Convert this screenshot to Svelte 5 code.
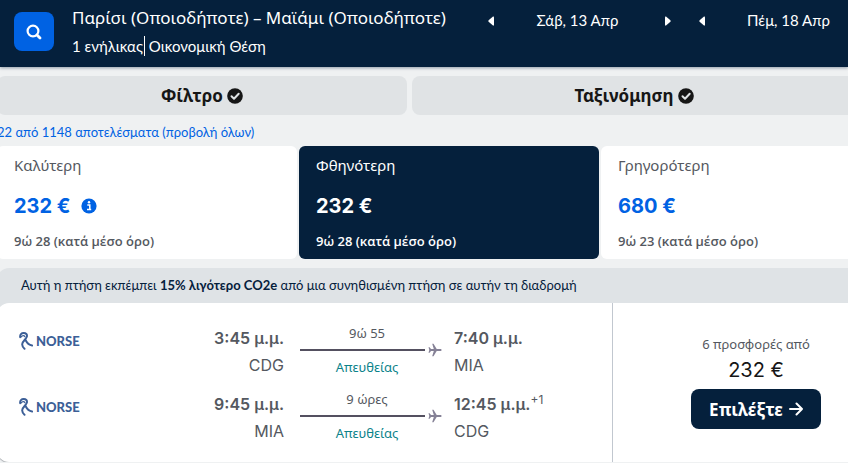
<script lang="ts">
  const dates = ['Σάβ, 13 Απρ', 'Πέμ, 18 Απρ'];

  const controls = ['Φίλτρο', 'Ταξινόμηση'];

  const tabs = [
    { id: 'best', name: 'Καλύτερη', price: '232 €', hours: '9ώ 28', info: true },
    { id: 'cheapest', name: 'Φθηνότερη', price: '232 €', hours: '9ώ 28', info: false },
    { id: 'fastest', name: 'Γρηγορότερη', price: '680 €', hours: '9ώ 23', info: false },
  ];

  const legs = [
    { depart: '3:45', from: 'CDG', duration: '9ώ 55', arrive: '7:40', to: 'MIA', days: '' },
    { depart: '9:45', from: 'MIA', duration: '9 ώρες', arrive: '12:45', to: 'CDG', days: '+1' },
  ];

  let selected = $state('cheapest');
</script>

<header class="header">
  <button class="search" aria-label="Αναζήτηση">
    <svg width="18" height="18" viewBox="0 0 18 18" fill="none" stroke="#fff" stroke-width="2.2">
      <circle cx="8" cy="8" r="5.4" />
      <path d="M12 12l3 3" stroke-width="2.8" stroke-linecap="round" />
    </svg>
  </button>
  <div class="summary">
    <h1>Παρίσι (Οποιοδήποτε) – Μαϊάμι (Οποιοδήποτε)</h1>
    <p><span>1 ενήλικας</span><span class="cabin">Οικονομική Θέση</span></p>
  </div>
  <div class="dates">
    {#each dates as date}
      <div class="stepper">
        <button aria-label="Προηγούμενη ημέρα">
          <svg width="6" height="10" viewBox="0 0 6 10"><path d="M5 .5Q6 0 6 1.5v7Q6 10 5 9.500L.6 5.800Q0 5 .6 4.200z" fill="#fff" /></svg>
        </button>
        <span class="date">{date}</span>
        <button aria-label="Επόμενη ημέρα">
          <svg width="6" height="10" viewBox="0 0 6 10"><path d="M1 .5Q0 0 0 1.500v7Q0 10 1 9.500L5.400 5.800Q6 5 5.400 4.200z" fill="#fff" /></svg>
        </button>
      </div>
    {/each}
  </div>
</header>

<main class="results">
  <div class="controls">
    {#each controls as control}
      <button>
        {control}
        <svg width="16" height="16" viewBox="0 0 16 16">
          <circle cx="8" cy="8" r="7.800" fill="#161616" />
          <path d="M4.500 8.200l2.500 2.500 4.700-5" fill="none" stroke="#e0e3e5" stroke-width="2" stroke-linecap="round" stroke-linejoin="round" />
        </svg>
      </button>
    {/each}
  </div>

  <a class="count" href="#all">22 από 1148 αποτελέσματα (προβολή όλων)</a>

  <div class="tabs">
    {#each tabs as tab}
      <button class="tab" class:selected={selected === tab.id} onclick={() => (selected = tab.id)}>
        <span class="name">{tab.name}</span>
        <span class="price">
          {tab.price}
          {#if tab.info}
            <svg width="16" height="16" viewBox="0 0 16 16">
              <circle cx="8" cy="8" r="7.600" fill="#0062e3" />
              <path d="M6.300 7h2.500v4.200M6 11.500h4.200" fill="none" stroke="#fff" stroke-width="1.500" />
              <circle cx="8" cy="4.300" r="1.200" fill="#fff" />
            </svg>
          {/if}
        </span>
        <span class="average">{tab.hours} (κατά μέσο όρο)</span>
      </button>
    {/each}
  </div>

  <article class="ticket">
    <p class="eco">Αυτή η πτήση εκπέμπει <strong>15% λιγότερο CO2e</strong> από μια συνηθισμένη πτήση σε αυτήν τη διαδρομή</p>
    <div class="card">
      <div class="legs">
        {#each legs as leg}
          <div class="leg">
            <div class="airline">
              <svg width="14" height="18" viewBox="0 0 14 18" fill="none" stroke="#3c5f97" stroke-width="2" stroke-linecap="round" stroke-linejoin="round">
                <path d="M1.200 5.200C.8 2.500 2.500 1 4.700 1s3.800 1.500 3.100 3.800C7 7.500 3 9.500 3.200 12.500c.1 2 1 3.300 2.300 4.300" />
                <path d="M2.200 4.900c1-1.500 3-1.700 3.700-.2" stroke-width="1.200" />
                <path d="M6.500 8c1.500 3 3.500 5 6.600 5.400" />
              </svg>
              <span>NORSE</span>
            </div>
            <div class="stop depart">
              <span class="time">{leg.depart} μ.μ.</span>
              <span class="code">{leg.from}</span>
            </div>
            <div class="route">
              <span class="duration">{leg.duration}</span>
              <div class="track">
                <span class="line"></span>
                <svg width="14" height="14" viewBox="0 0 14 14">
                  <path d="M13.600 7c0-.7-.6-1-1.400-1H8.700L5.500.7H4.200L5.800 6H3L1.600 4.300H.5L1.300 7l-.8 2.700h1.100L3 8h2.800l-1.600 5.300h1.300L8.700 8h3.500c.8 0 1.400-.3 1.400-1z" fill="#858196" />
                </svg>
              </div>
              <span class="direct">Απευθείας</span>
            </div>
            <div class="stop">
              <span class="time">{leg.arrive} μ.μ.{#if leg.days}<sup>{leg.days}</sup>{/if}</span>
              <span class="code">{leg.to}</span>
            </div>
          </div>
        {/each}
      </div>
      <div class="offer">
        <span class="deals">6 προσφορές από</span>
        <span class="total">232 €</span>
        <button class="select">
          Επιλέξτε
          <svg width="14" height="14" viewBox="0 0 14 14" fill="none" stroke="#fff" stroke-width="2" stroke-linecap="round" stroke-linejoin="round">
            <path d="M1 7h12M7.500 1.500L13 7l-5.500 5.500" />
          </svg>
        </button>
      </div>
    </div>
  </article>
</main>

<style>
  :global(body) {
    background: #eff1f2;
    color: #161616;
    font-family: Lato, 'Noto Sans', sans-serif;
    overflow-x: hidden;
  }

  button {
    border: 0;
    padding: 0;
    background: none;
    color: inherit;
    font: inherit;
    cursor: pointer;
  }

  svg {
    display: block;
    flex: none;
  }

  h1,
  p {
    margin: 0;
  }

  .header {
    display: flex;
    align-items: flex-start;
    box-sizing: border-box;
    height: 67px;
    padding: 0 0 0 14px;
    background: #05203c;
    color: #fff;
    box-shadow: 0 1px 3px #05203c66;
    overflow: hidden;
  }

  .search {
    display: grid;
    place-items: center;
    flex: none;
    width: 40px;
    height: 39px;
    margin: 12px 18px 0 0;
    border-radius: 8px;
    background: #0062e3;
  }

  .summary {
    flex: 1;
    padding-top: 6px;
    white-space: nowrap;
  }

  .summary h1 {
    font-family: 'Noto Sans', sans-serif;
    font-size: 17px;
    font-weight: 400;
    line-height: 24px;
  }

  .summary p {
    display: flex;
    padding-top: 6px;
    font-size: 15px;
    line-height: 20px;
  }

  .cabin {
    margin-left: 1px;
    padding-left: 4px;
    border-left: 1px solid #fff;
  }

  .dates {
    display: flex;
    flex: none;
    gap: 28px;
    margin-right: -34px;
    padding-top: 10px;
  }

  .stepper {
    display: flex;
    align-items: center;
    width: 183px;
    font-size: 15px;
    line-height: 20px;
  }

  .date {
    flex: 1;
    padding: 0 4px 2px 0;
    text-align: center;
  }

  .results {
    margin: 9px -53px 0 -3px;
  }

  .controls {
    display: grid;
    grid-template-columns: 410fr 444fr;
    gap: 5px;
    margin-right: 45px;
  }

  .controls button,
  .select {
    font-family: 'Noto Sans', sans-serif;
    font-size: 17px;
    font-weight: 700;
  }

  .controls button {
    display: flex;
    justify-content: center;
    align-items: center;
    gap: 4px;
    height: 39px;
    border-radius: 8px;
    background: #e0e3e5;
  }

  .count {
    display: block;
    padding: 7px 0 4px;
    color: #0062e3;
    font-size: 13px;
    line-height: 20px;
    text-decoration: none;
  }

  .tabs {
    display: grid;
    grid-template-columns: repeat(3, 1fr);
    gap: 2px;
  }

  .tab {
    display: flex;
    flex-direction: column;
    padding: 9px 17px 8px;
    border-radius: 6px;
    background: #fff;
    color: #545860;
    text-align: left;
  }

  .name {
    font-family: 'Noto Sans', sans-serif;
    font-size: 15px;
    line-height: 20px;
  }

  .price {
    display: flex;
    align-items: center;
    gap: 10px;
    padding: 17px 0 11px;
    color: #0062e3;
    font-family: Inter, sans-serif;
    font-size: 20px;
    font-weight: 700;
    line-height: 28px;
  }

  .average {
    font-family: 'Open Sans', sans-serif;
    font-size: 13px;
    font-weight: 600;
    line-height: 20px;
  }

  .selected {
    background: #05203c;
  }

  .selected,
  .selected .price {
    color: #fff;
  }

  .ticket {
    margin-top: 9px;
    border-radius: 12px;
    background: #dfe3e6;
  }

  .eco {
    padding: 7px 24px 8px;
    color: #05203c;
    font-size: 13px;
    line-height: 20px;
  }

  .card {
    display: grid;
    grid-template-columns: 1fr 288px;
    border-radius: 12px;
    background: #fff;
    box-shadow: 0 1px 1px #a9acb0;
  }

  .legs {
    padding: 20px 0 7px;
    border-right: 1px solid #c1c7cf;
  }

  .leg {
    display: grid;
    grid-template-columns: 64px 1fr 142px 158px;
    column-gap: 12px;
    height: 66px;
    padding-left: 22px;
  }

  .airline {
    display: flex;
    align-items: center;
    gap: 3px;
    height: 36px;
    color: #3c5f97;
    font-size: 13px;
    font-weight: 900;
  }

  .stop {
    display: flex;
    flex-direction: column;
    padding-top: 3px;
    color: #545860;
    font-size: 16px;
    line-height: 24px;
  }

  .depart {
    align-items: flex-end;
    padding-right: 4px;
  }

  .time {
    padding-bottom: 3px;
    font-family: Inter, 'Noto Sans', sans-serif;
    font-weight: 600;
    white-space: nowrap;
  }

  .time sup {
    font-size: 12px;
    font-weight: 400;
    line-height: 0;
  }

  .code {
    font-family: Inter, sans-serif;
  }

  .route {
    display: flex;
    flex-direction: column;
    color: #545860;
    font-family: 'Noto Sans', sans-serif;
    font-size: 13px;
    line-height: 20px;
  }

  .duration,
  .direct {
    padding-right: 8px;
    text-align: center;
  }

  .track {
    display: flex;
    align-items: center;
    gap: 3px;
  }

  .line {
    flex: 1;
    height: 2px;
    background: #545060;
  }

  .direct {
    color: #0c838a;
  }

  .offer {
    display: flex;
    flex-direction: column;
    align-items: center;
    padding: 31px 2px 0 0;
  }

  .deals {
    color: #545860;
    font-family: 'Noto Sans', sans-serif;
    font-size: 13px;
    line-height: 20px;
  }

  .total {
    padding: 2px 0 5px;
    font-family: Inter, sans-serif;
    font-size: 20px;
    line-height: 28px;
  }

  .select {
    display: flex;
    align-items: center;
    gap: 6px;
    height: 40px;
    padding: 0 18px;
    border-radius: 8px;
    background: #05203c;
    color: #fff;
  }
</style>
